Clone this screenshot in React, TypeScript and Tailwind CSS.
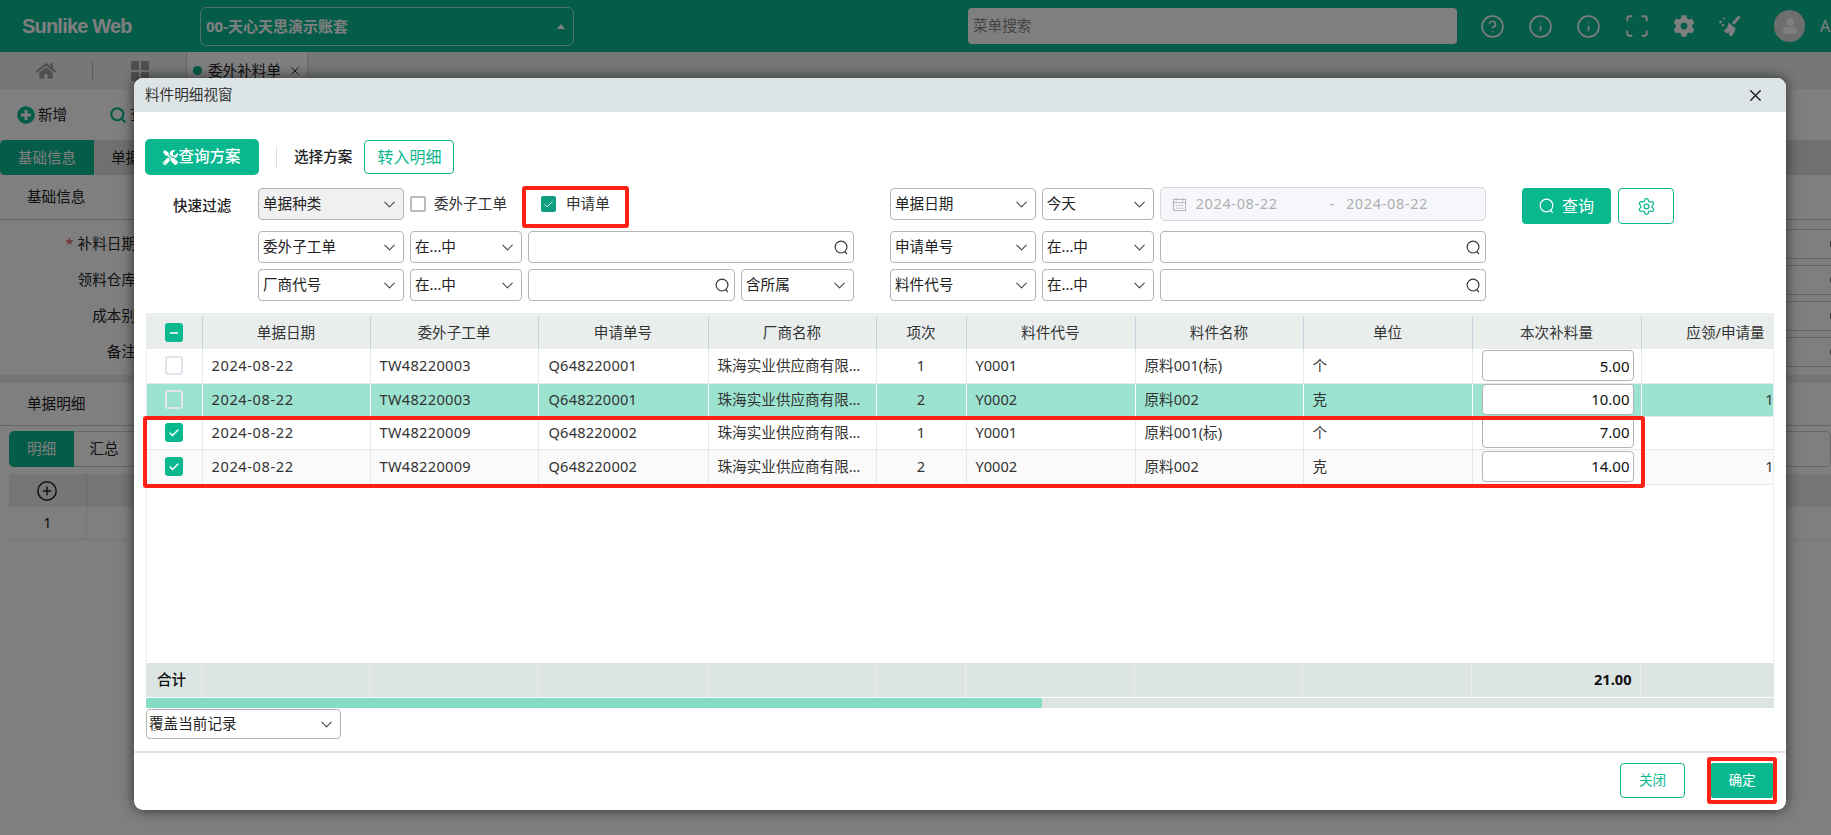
import { Check, ChevronDown, CircleHelp, CirclePlus, Info, Minus, Scan, Search, Settings, X } from "lucide-react";
import { FaCog, FaHome, FaPlusCircle, FaTools, FaUser } from "react-icons/fa";

const COLS = ["w-[55px]", "w-[168px]", "w-[168px]", "w-[170px]", "w-[168px]", "w-[90px]", "w-[169px]", "w-[168px]", "w-[169px]", "w-[169px]", "w-[169px]"];

const HEADERS = ["单据日期", "委外子工单", "申请单号", "厂商名称", "项次", "料件代号", "料件名称", "单位", "本次补料量", "应领/申请量"];

const ROWS = [
  { date: "2024-08-22", order: "TW48220003", apply: "Q648220001", item: "1", code: "Y0001", name: "原料001(标)", unit: "个", qty: "5.00", need: "5.00", checked: false, rowClass: "h-[34px] bg-white", cellClass: "border-[#e8e8e8]" },
  { date: "2024-08-22", order: "TW48220003", apply: "Q648220001", item: "2", code: "Y0002", name: "原料002", unit: "克", qty: "10.00", need: "10.00", checked: false, rowClass: "h-[33px] bg-[#9be3cf]", cellClass: "border-white" },
  { date: "2024-08-22", order: "TW48220009", apply: "Q648220002", item: "1", code: "Y0001", name: "原料001(标)", unit: "个", qty: "7.00", need: "7.00", checked: true, rowClass: "h-[33px] bg-white", cellClass: "border-[#e8e8e8]" },
  { date: "2024-08-22", order: "TW48220009", apply: "Q648220002", item: "2", code: "Y0002", name: "原料002", unit: "克", qty: "14.00", need: "14.00", checked: true, rowClass: "h-[35px] bg-[#fafafa]", cellClass: "border-[#e8e8e8]" },
];

function QIcon({ className }: { className: string }) {
  return (
    <svg viewBox="0 0 16 16" fill="none" stroke="currentColor" strokeWidth="1.2" className={className}>
      <circle cx="7.5" cy="7.5" r="6.3" />
      <path d="M11.5 12.2l2.2 2.8" />
    </svg>
  );
}

function BroomIcon({ className }: { className: string }) {
  return (
    <svg viewBox="0 0 24 24" fill="currentColor" className={className}>
      <path d="M20.5 1.5l2 1.8-6.3 7.5-2.2-2z" />
      <path d="M10.5 8.5l7 6c-.6 3-2.3 6-4 8-1-.3-2-.9-3-1.7l1-2.8-2.7 1.5c-1.1-1-2.2-2-3.2-3.3 2.6-.6 4.6-2.5 4.9-7.7z" />
      <circle cx="2.5" cy="8" r="1.3" />
      <circle cx="6" cy="4.5" r="1" />
      <circle cx="5" cy="11" r="1.2" />
    </svg>
  );
}

function SelectBox({ label, className }: { label: string; className: string }) {
  return (
    <div className={`flex h-[32px] items-center justify-between rounded-[4px] border border-[#b4b4b4] pl-[4px] pr-[4px] text-[14.6px] text-[#222] ${className}`}>
      <span>{label}</span>
      <ChevronDown className="h-[19px] w-[19px] text-[#444]" strokeWidth={1.3} />
    </div>
  );
}

function SearchBox({ className }: { className: string }) {
  return (
    <div className={`flex h-[32px] items-center justify-end rounded-[4px] border border-[#b4b4b4] pr-[4px] ${className}`}>
      <QIcon className="h-[15px] w-[15px] text-[#333]" />
    </div>
  );
}

function RowCheck({ checked, dim }: { checked: boolean; dim?: boolean }) {
  if (checked) {
    return (
      <span className="mx-auto flex h-[19px] w-[18px] items-center justify-center rounded-[3px] bg-[#0ab88f] text-white">
        <Check className="h-[12px] w-[12px]" strokeWidth={3} />
      </span>
    );
  }
  return <span className={`mx-auto block h-[19px] w-[18px] rounded-[3px] border-2 border-[#e4e4ee] ${dim ? "" : "bg-white"}`} />;
}

function Background() {
  return (
    <div className="flex h-[835px] w-[1831px] flex-col overflow-hidden bg-white text-[14.6px] text-[#222]">
      <header className="flex h-[52px] shrink-0 items-center bg-[#0ab892] text-white">
        <div className="ml-[22px] w-[178px] font-['Liberation_Sans',sans-serif] text-[20px] font-bold tracking-[-0.8px]">Sunlike Web</div>
        <div className="flex h-[39px] w-[374px] items-center justify-between rounded-[6px] border border-white/60 px-[5px] text-[15px] font-bold">
          <span>00-天心天思演示账套</span>
          <span className="mr-[3px] h-0 w-0 border-x-[4px] border-b-[5px] border-x-transparent border-b-white" />
        </div>
        <div className="ml-[394px] flex h-[36px] w-[489px] items-center rounded-[4px] bg-white px-[5px] text-[#888]">菜单搜索</div>
        <div className="ml-[23px] flex w-[262px] items-center justify-between">
          <CircleHelp className="h-[25px] w-[25px]" strokeWidth={1.5} />
          <Info className="h-[25px] w-[25px]" strokeWidth={1.5} />
          <Info className="h-[25px] w-[25px]" strokeWidth={1.5} />
          <Scan className="h-[26px] w-[26px]" strokeWidth={1.8} />
          <FaCog className="h-[22px] w-[22px]" />
          <BroomIcon className="h-[24px] w-[24px]" />
        </div>
        <div className="ml-[32px] flex h-[32px] w-[31px] items-center justify-center rounded-full bg-[#dcdcdc]">
          <FaUser className="h-[16px] w-[16px] text-white" />
        </div>
        <span className="ml-[15px] text-[16px]">A</span>
      </header>

      <div className="flex h-[37px] shrink-0 items-center bg-[#ecf0ec]">
        <FaHome className="ml-[36px] h-[20px] w-[20px] text-[#a0a0a0]" />
        <span className="ml-[36px] h-[20px] w-px bg-[#bbb]" />
        <div className="ml-[38px] grid h-[20px] w-[18px] grid-cols-2 gap-[2px]">
          <span className="bg-[#a0a0a0]" />
          <span className="bg-[#a0a0a0]" />
          <span className="bg-[#a0a0a0]" />
          <span className="bg-[#a0a0a0]" />
        </div>
        <div className="ml-[37px] flex h-full w-[122px] items-center border-x border-[#ccc] bg-white pl-[6px]">
          <span className="h-[9px] w-[9px] rounded-full bg-[#0ab88f]" />
          <span className="ml-[6px]">委外补料单</span>
          <X className="ml-[7px] h-[14px] w-[14px]" strokeWidth={1.6} />
        </div>
      </div>

      <div className="flex h-[51px] shrink-0 items-center pl-[17px]">
        <FaPlusCircle className="h-[18px] w-[18px] text-[#0ab88f]" />
        <span className="ml-[3px]">新增</span>
        <Search className="ml-[42px] h-[18px] w-[18px] text-[#0ab88f]" strokeWidth={3} />
        <span className="ml-[3px]">查询</span>
      </div>

      <div className="flex h-[35px] shrink-0 items-center bg-[#dde2df]">
        <div className="flex h-full w-[94px] items-center justify-center rounded-l-[5px] bg-[#0ab892] text-white">基础信息</div>
        <span className="ml-[17px]">单据</span>
      </div>

      <div className="flex h-[45px] shrink-0 items-center border-b border-[#ccc] pl-[27px]">基础信息</div>
      <div className="flex shrink-0 flex-col gap-[6px] pb-[8px] pt-[9px]">
        {[
          { label: "补料日期", star: true },
          { label: "领料仓库" },
          { label: "成本别" },
          { label: "备注" },
        ].map((r) => (
          <div key={r.label} className="flex h-[30px] items-center">
            <div className="w-[136px] text-right">
              {r.star && <span className="mr-[4px] text-[#e05050]">*</span>}
              {r.label}
            </div>
            <div className="ml-auto flex h-full w-[70px] items-center justify-end border-y border-[#ccc]">
              <span className="-mr-[13px] h-[14px] w-[14px] rounded-full border border-[#555]" />
            </div>
          </div>
        ))}
      </div>
      <div className="h-[8px] shrink-0 bg-[#e8ebe9]" />

      <div className="flex h-[43px] shrink-0 items-center border-b border-[#ccc] pl-[27px]">单据明细</div>
      <div className="ml-[9px] mt-[5px] flex h-[36px] shrink-0">
        <div className="flex w-[65px] items-center justify-center rounded-l-[5px] bg-[#0ab892] text-white">明细</div>
        <div className="flex w-[60px] items-center justify-center border-y border-[#ccc]">汇总</div>
        <div className="ml-auto flex">
          <div className="h-full w-[70px] rounded-[5px] border border-[#0ab892]" />
          <div className="ml-[9px] h-full w-[60px] rounded-[5px] border border-[#ccc]" />
        </div>
      </div>
      <div className="ml-[9px] mt-[7px] flex h-[33px] shrink-0 items-center bg-[#e9eeed]">
        <div className="flex h-full w-[78px] items-center justify-center border-r border-[#c9d1e0] pr-[2px]">
          <CirclePlus className="h-[22px] w-[22px] text-[#222]" strokeWidth={1.6} />
        </div>
      </div>
      <div className="ml-[9px] flex h-[33px] shrink-0 border-b border-[#e8e8e8]">
        <div className="flex w-[78px] items-center justify-center border-r border-[#e8e8e8]">1</div>
      </div>
    </div>
  );
}

function Modal() {
  return (
    <div className="absolute left-[134px] top-[78px] flex h-[732px] w-[1652px] flex-col overflow-hidden rounded-[9px] bg-white text-[14.6px] text-[#333] shadow-[0_0_14px_rgba(0,0,0,0.65)]">
      <div className="flex h-[34px] shrink-0 items-center justify-between bg-[#dce4e6] pl-[11px] pr-[21px] text-[#333]">
        <span>料件明细视窗</span>
        <X className="h-[19px] w-[19px] text-[#111]" strokeWidth={1.5} />
      </div>

      <div className="ml-[11px] mt-[27px] flex h-[36px] shrink-0 items-center">
        <button className="flex h-[36px] w-[114px] items-center justify-center rounded-[5px] bg-[#0ab88f] font-medium text-white">
          <FaTools className="h-[15px] w-[15px]" />
          <span className="text-[15.5px]">查询方案</span>
        </button>
        <span className="ml-[17px] h-[20px] w-px bg-[#ddd]" />
        <span className="ml-[17px] font-medium text-[#222]">选择方案</span>
        <button className="ml-[12px] h-[34px] w-[90px] rounded-[4px] border border-[#0ab88f] text-[16px] text-[#0ab88f]">转入明细</button>
      </div>

      <div className="mt-[13px] flex shrink-0">
        <div className="w-[124px] pl-[39px] pt-[7px] font-medium text-[#222]">快速过滤</div>
        <div className="w-[596px]">
          <div className="flex h-[43px]">
            <SelectBox label="单据种类" className="w-[146px] bg-[#f0f0f0]" />
            <div className="ml-[6px] flex h-[32px] items-center">
              <span className="h-[16px] w-[16px] rounded-[2px] border-2 border-[#bbb]" />
              <span className="ml-[8px]">委外子工单</span>
            </div>
            <div className="ml-[34px] flex h-[32px] items-center">
              <span className="flex h-[16px] w-[15px] items-center justify-center rounded-[2px] bg-[#0f9f7f] text-white">
                <Check className="h-[11px] w-[11px]" strokeWidth={2} />
              </span>
              <span className="ml-[10px]">申请单</span>
            </div>
          </div>
          <div className="flex h-[38px] gap-[6px]">
            <SelectBox label="委外子工单" className="w-[146px]" />
            <SelectBox label="在...中" className="w-[112px]" />
            <SearchBox className="w-[326px]" />
          </div>
          <div className="flex h-[32px] gap-[6px]">
            <SelectBox label="厂商代号" className="w-[146px]" />
            <SelectBox label="在...中" className="w-[112px]" />
            <SearchBox className="w-[207px]" />
            <SelectBox label="含所属" className="w-[113px]" />
          </div>
        </div>

        <div className="ml-[36px] w-[596px]">
          <div className="flex h-[43px] gap-[6px]">
            <SelectBox label="单据日期" className="w-[146px]" />
            <SelectBox label="今天" className="w-[112px]" />
            <div className="-mt-[1px] flex h-[34px] w-[327px] items-center whitespace-nowrap rounded-[5px] border border-[#d6d9de] bg-[#f5f7fa] pl-[11px] tracking-[0.6px] text-[#b0b0b0]">
              <svg viewBox="0 0 16 16" fill="none" stroke="currentColor" className="h-[15px] w-[15px]">
                <rect x="1.5" y="2.5" width="13" height="12" />
                <path d="M1.5 6h13M4.5 1v3M11.5 1v3M4 9h2M7 9h2M10 9h2M4 12h2M7 12h2M10 12h2" />
              </svg>
              <span className="ml-[9px] w-[84px]">2024-08-22</span>
              <span className="ml-[50px]">-</span>
              <span className="ml-[11px]">2024-08-22</span>
            </div>
          </div>
          <div className="flex h-[38px] gap-[6px]">
            <SelectBox label="申请单号" className="w-[146px]" />
            <SelectBox label="在...中" className="w-[112px]" />
            <SearchBox className="w-[326px]" />
          </div>
          <div className="flex h-[32px] gap-[6px]">
            <SelectBox label="料件代号" className="w-[146px]" />
            <SelectBox label="在...中" className="w-[112px]" />
            <SearchBox className="w-[326px]" />
          </div>
        </div>

        <div className="ml-[36px] flex h-[36px] gap-[7px]">
          <button className="flex h-[36px] w-[89px] items-center justify-center gap-[7px] rounded-[4px] bg-[#0ab88f] text-white">
            <QIcon className="h-[16px] w-[16px]" />
            <span className="text-[16px]">查询</span>
          </button>
          <button className="flex h-[36px] w-[56px] items-center justify-center rounded-[4px] border border-[#0ab88f] text-[#0ab88f]">
            <Settings className="h-[19px] w-[19px]" strokeWidth={1.6} />
          </button>
        </div>
      </div>

      <div className="ml-[12px] mt-[12px] h-[350px] w-[1628px] shrink-0 overflow-hidden border-x border-t-[3px] border-[#ebeeee] border-t-[#eef0f0]">
        <table className="w-[1663px] table-fixed">
          <colgroup>
            {COLS.map((c, i) => (
              <col key={i} className={c} />
            ))}
          </colgroup>
          <thead>
            <tr className="h-[33px] bg-[#e9eeed]">
              <th className="border-r border-[#c9d1e0] font-normal">
                <span className="mx-auto flex h-[19px] w-[18px] items-center justify-center rounded-[3px] bg-[#0ab88f] text-white">
                  <Minus className="h-[12px] w-[12px]" strokeWidth={3} />
                </span>
              </th>
              {HEADERS.map((h) => (
                <th key={h} className="border-r border-[#c9d1e0] font-normal">{h}</th>
              ))}
            </tr>
          </thead>
          <tbody>
            {ROWS.map((r, i) => (
              <tr key={i} className={`border-b border-[#e8e8e8] ${r.rowClass}`}>
                <td className={`border-r ${r.cellClass}`}><RowCheck checked={r.checked} dim={i === 1} /></td>
                <td className={`border-r px-[9px] tracking-[0.6px] ${r.cellClass}`}>{r.date}</td>
                <td className={`border-r px-[9px] tracking-[0.3px] ${r.cellClass}`}>{r.order}</td>
                <td className={`border-r px-[10px] tracking-[0.2px] ${r.cellClass}`}>{r.apply}</td>
                <td className={`truncate border-r px-[9px] ${r.cellClass}`}>珠海实业供应商有限公司</td>
                <td className={`border-r text-center ${r.cellClass}`}>{r.item}</td>
                <td className={`border-r px-[9px] ${r.cellClass}`}>{r.code}</td>
                <td className={`border-r px-[9px] ${r.cellClass}`}>{r.name}</td>
                <td className={`border-r px-[9px] ${r.cellClass}`}>{r.unit}</td>
                <td className={`border-r pl-[9px] pr-[7px] ${r.cellClass}`}>
                  <div className="flex h-[31px] items-center justify-end rounded-[4px] border border-[#b4b4b4] bg-white pr-[3px] text-[15px] text-[#111]">{r.qty}</div>
                </td>
                <td className={`border-r pr-[7px] text-right ${r.cellClass}`}>{r.need}</td>
              </tr>
            ))}
          </tbody>
        </table>
      </div>

      <div className="ml-[12px] w-[1628px] shrink-0 overflow-hidden">
        <table className="w-[1663px] table-fixed">
          <colgroup>
            {COLS.map((c, i) => (
              <col key={i} className={c} />
            ))}
          </colgroup>
          <tbody>
            <tr className="h-[34px] bg-[#dce5e4]">
              <td className="border-r border-[#e8eeed] pl-[11px] font-medium text-[#111]">合计</td>
              {HEADERS.map((h) => (
                <td key={h} className="border-r border-[#e8eeed] pr-[8px] text-right font-bold text-[#111]">
                  {h === "本次补料量" ? "21.00" : ""}
                </td>
              ))}
            </tr>
          </tbody>
        </table>
        <div className="mt-px h-[10px] bg-[#dce5e4]">
          <div className="h-full w-[896px] rounded-[2px] bg-[#84dcc5]" />
        </div>
      </div>

      <div className="ml-[12px] mt-px shrink-0">
        <SelectBox label="覆盖当前记录" className="h-[30px]! w-[195px] pl-[2px]! text-[#111]" />
      </div>

      <div className="mt-[12px] flex flex-1 items-start justify-end gap-[26px] border-t-2 border-[#e2e4e6] pr-[13px] pt-[10px]">
        <button className="h-[35px] w-[65px] rounded-[4px] border border-[#0ab88f] text-[13.6px] text-[#0ab88f]">关闭</button>
        <button className="h-[35px] w-[62px] rounded-[2px] bg-[#0ab88f] text-[13.6px] text-white">确定</button>
      </div>

      <div className="absolute left-[388px] top-[108px] h-[42px] w-[107px] rounded-[3px] border-[4px] border-[#ff2016]" />
      <div className="absolute left-[9px] top-[338px] h-[72px] w-[1502px] rounded-[3px] border-[4px] border-[#ff2016]" />
      <div className="absolute left-[1573px] top-[679px] h-[47px] w-[70px] rounded-[3px] border-[4px] border-[#ff2016]" />
    </div>
  );
}

export default function App() {
  return (
    <div className="relative h-[835px] w-[1831px] overflow-hidden font-['Noto_Sans','Noto_Sans_CJK_SC',sans-serif]">
      <Background />
      <div className="absolute inset-0 bg-black/50" />
      <Modal />
    </div>
  );
}
